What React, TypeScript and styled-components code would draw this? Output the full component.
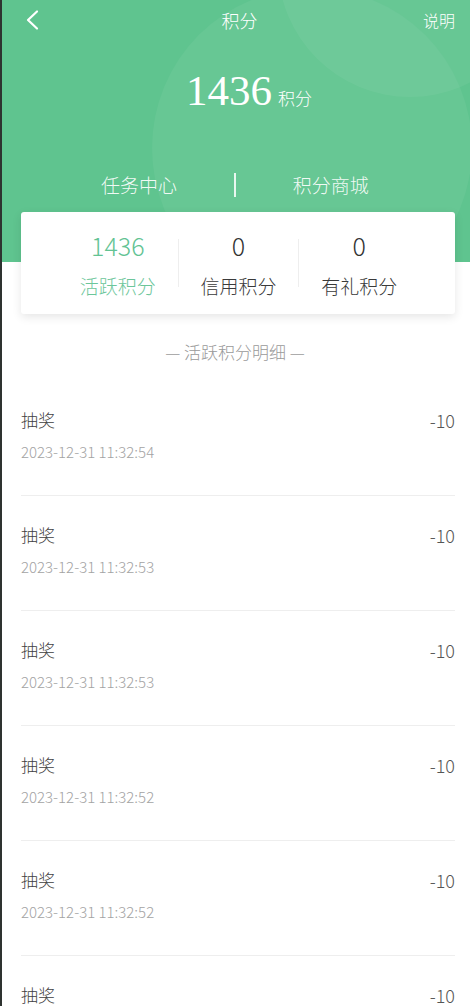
import React from "react";
import styled, { createGlobalStyle } from "styled-components";

const GlobalStyle = createGlobalStyle`
  html, body {
    margin: 0;
    padding: 0;
    background: #ffffff;
  }
  body {
    font-family: "Noto Sans CJK SC", "Noto Sans", sans-serif;
    font-weight: 300;
    -webkit-font-smoothing: antialiased;
  }
  body::before {
    content: "";
    position: fixed;
    left: 0;
    top: 0;
    bottom: 0;
    width: 1.5px;
    background: #2e3330;
    z-index: 10;
  }
`;

const Page = styled.div`
  width: 470px;
  min-height: 1006px;
  background: #ffffff;
  overflow: hidden;
`;

const Header = styled.header`
  position: relative;
  height: 262px;
  background: #5fc48f;
  overflow: hidden;
  color: #ffffff;
`;

const Bubble = styled.div<{ $x: number; $y: number; $r: number; $a: number }>`
  position: absolute;
  left: ${(p) => p.$x - p.$r}px;
  top: ${(p) => p.$y - p.$r}px;
  width: ${(p) => p.$r * 2}px;
  height: ${(p) => p.$r * 2}px;
  border-radius: 50%;
  background: rgba(255, 255, 255, ${(p) => p.$a});
  pointer-events: none;
`;

const HeaderContent = styled.div`
  position: relative;
  z-index: 1;
  display: flex;
  flex-direction: column;
`;

const Nav = styled.nav`
  display: grid;
  grid-template-columns: 1fr auto 1fr;
  align-items: center;
  height: 40px;
  padding: 0 15px 0 24px;
`;

const BackButton = styled.button`
  justify-self: start;
  display: flex;
  align-items: center;
  background: none;
  border: none;
  padding: 0;
  margin: 0;
  cursor: pointer;
`;

const NavTitle = styled.div`
  font-size: 18px;
  line-height: 24px;
  color: #ffffff;
`;

const NavAction = styled.div`
  justify-self: end;
  font-size: 16px;
  line-height: 24px;
  color: #ffffff;
`;

const ScoreRow = styled.div`
  display: flex;
  justify-content: center;
  align-items: baseline;
  margin-top: 25px;
  line-height: 52px;
  padding-left: 28px;
`;

const ScoreNumber = styled.span`
  font-family: "Liberation Serif", "DejaVu Serif", serif;
  font-size: 43px;
  font-weight: 400;
`;

const ScoreUnit = styled.span`
  font-size: 17px;
  margin-left: 6px;
`;

const Tabs = styled.div`
  display: flex;
  align-items: center;
  margin-top: 48px;
  padding: 0 44px;
`;

const Tab = styled.div`
  flex: 1;
  text-align: center;
  font-size: 19px;
  line-height: 26px;
  color: rgba(255, 255, 255, 0.92);
`;

const TabDivider = styled.div`
  width: 1.5px;
  height: 24px;
  background: rgba(255, 255, 255, 0.85);
`;

const Card = styled.section`
  position: relative;
  z-index: 2;
  display: flex;
  margin: -50px 15px 0 21px;
  height: 102px;
  padding: 0 36px 0 37px;
  box-sizing: border-box;
  background: #ffffff;
  border-radius: 3px;
  box-shadow: 0 3px 10px rgba(0, 0, 0, 0.1);
`;

const Stat = styled.div`
  flex: 1;
  display: flex;
  flex-direction: column;
  align-items: center;
  padding-top: 18px;
`;

const StatValue = styled.div<{ $active?: boolean }>`
  font-size: 25px;
  line-height: 30px;
  color: ${(p) => (p.$active ? "#62c393" : "#333333")};
`;

const StatLabel = styled.div<{ $active?: boolean }>`
  margin-top: 13px;
  font-size: 19px;
  line-height: 26px;
  color: ${(p) => (p.$active ? "#6cc69a" : "#3a3a3a")};
`;

const StatDivider = styled.div`
  align-self: center;
  width: 1px;
  height: 48px;
  background: #eeeeee;
`;

const SectionTitle = styled.h2`
  margin: 27px 0 0;
  text-align: center;
  font-size: 17px;
  line-height: 22px;
  font-weight: 300;
  color: #9a9a9a;
`;

const List = styled.ul`
  list-style: none;
  margin: 18px 15px 0 21px;
  padding: 0;
`;

const Item = styled.li`
  padding: 27px 0 33px;
  border-bottom: 1px solid #eeeeee;
`;

const ItemTop = styled.div`
  display: flex;
  justify-content: space-between;
  align-items: center;
  line-height: 24px;
`;

const ItemTitle = styled.span`
  font-size: 17px;
  color: #404040;
`;

const ItemAmount = styled.span`
  font-size: 18px;
  color: #555555;
`;

const ItemDate = styled.div`
  margin-top: 10px;
  font-size: 15px;
  line-height: 20px;
  color: #a3a3a3;
`;

const records = [
  { title: "抽奖", time: "2023-12-31 11:32:54", amount: "-10" },
  { title: "抽奖", time: "2023-12-31 11:32:53", amount: "-10" },
  { title: "抽奖", time: "2023-12-31 11:32:53", amount: "-10" },
  { title: "抽奖", time: "2023-12-31 11:32:52", amount: "-10" },
  { title: "抽奖", time: "2023-12-31 11:32:52", amount: "-10" },
  { title: "抽奖", time: "2023-12-31 11:32:51", amount: "-10" },
];

const BackIcon = () => (
  <svg width="16" height="22" viewBox="0 0 16 22" fill="none">
    <polyline
      points="13,2.5 4,11 13,19.5"
      stroke="#ffffff"
      strokeWidth="2.2"
      strokeLinecap="round"
      strokeLinejoin="round"
    />
  </svg>
);

export default function App() {
  return (
    <Page>
      <GlobalStyle />
      <Header>
        <Bubble $x={312} $y={148} $r={160} $a={0.05} />
        <Bubble $x={410} $y={-35} $r={132} $a={0.05} />
        <HeaderContent>
          <Nav>
            <BackButton aria-label="返回">
              <BackIcon />
            </BackButton>
            <NavTitle>积分</NavTitle>
            <NavAction>说明</NavAction>
          </Nav>
          <ScoreRow>
            <ScoreNumber>1436</ScoreNumber>
            <ScoreUnit>积分</ScoreUnit>
          </ScoreRow>
          <Tabs>
            <Tab>任务中心</Tab>
            <TabDivider />
            <Tab>积分商城</Tab>
          </Tabs>
        </HeaderContent>
      </Header>

      <Card>
        <Stat>
          <StatValue $active>1436</StatValue>
          <StatLabel $active>活跃积分</StatLabel>
        </Stat>
        <StatDivider />
        <Stat>
          <StatValue>0</StatValue>
          <StatLabel>信用积分</StatLabel>
        </Stat>
        <StatDivider />
        <Stat>
          <StatValue>0</StatValue>
          <StatLabel>有礼积分</StatLabel>
        </Stat>
      </Card>

      <SectionTitle>— 活跃积分明细 —</SectionTitle>

      <List>
        {records.map((r, i) => (
          <Item key={i}>
            <ItemTop>
              <ItemTitle>{r.title}</ItemTitle>
              <ItemAmount>{r.amount}</ItemAmount>
            </ItemTop>
            <ItemDate>{r.time}</ItemDate>
          </Item>
        ))}
      </List>
    </Page>
  );
}
